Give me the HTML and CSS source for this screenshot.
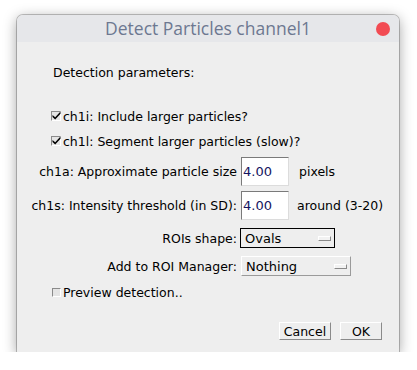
FILE: index.html
```html
<!DOCTYPE html>
<html lang="en">
<head>
  <meta charset="UTF-8" />
  <meta name="viewport" content="width=device-width, initial-scale=1.0" />
  <title>Detect Particles channel1</title>
  <link rel="stylesheet" href="styles.css">
</head>
<body>

  <div class="window">
    <div class="titlebar">
      <span class="title">Detect Particles channel1</span>
      <span class="close"></span>
    </div>

    <div class="content">
      <div class="heading">Detection parameters:</div>

      <div class="checks">
        <div class="check">
          <span class="box">
            <svg width="9" height="9" viewBox="0 0 9 9"><path d="M0.5 4 L3.2 6.2 L8.5 0.5 L8.5 2.8 L3.2 8.5 L0.5 6 Z" fill="#000"/></svg>
          </span>
          <span>ch1i: Include larger particles?</span>
        </div>
        <div class="check">
          <span class="box">
            <svg width="9" height="9" viewBox="0 0 9 9"><path d="M0.5 4 L3.2 6.2 L8.5 0.5 L8.5 2.8 L3.2 8.5 L0.5 6 Z" fill="#000"/></svg>
          </span>
          <span>ch1l: Segment larger particles (slow)?</span>
        </div>
      </div>

      <div class="params">
        <span class="label">ch1a: Approximate particle size</span>
        <div class="control">
          <span class="field">4.00</span>
          <span class="unit">pixels</span>
        </div>

        <span class="label">ch1s: Intensity threshold (in SD):</span>
        <div class="control">
          <span class="field">4.00</span>
          <span class="unit unit--around">around (3-20)</span>
        </div>

        <span class="label choice-row">ROIs shape:</span>
        <div class="control choice-row">
          <span class="choice choice--focus choice--short">Ovals<i class="knob"></i></span>
        </div>

        <span class="label choice-row">Add to ROI Manager:</span>
        <div class="control choice-row">
          <span class="choice choice--long">Nothing<i class="knob"></i></span>
        </div>
      </div>

      <div class="check preview">
        <span class="box"></span>
        <span>Preview detection..</span>
      </div>

      <div class="buttons">
        <button class="button button--cancel">Cancel</button>
        <button class="button button--ok">OK</button>
      </div>
    </div>
  </div>

</body>
</html>
```

FILE: styles.css
```css
* {
  margin: 0;
  padding: 0;
  box-sizing: border-box;
}

body {
  background-color: #ffffff;
  font-family: "DejaVu Sans", sans-serif;
  font-size: 12.5px;
  color: #000;
}

.window {
  margin: 15px 18px 0 17px;
  width: 382px;
  height: 337px;
  background-color: #eeeeee;
  border-radius: 6px 6px 0 0;
  box-shadow: 0 0 0 1px rgba(0, 0, 0, 0.22), 0 3px 14px rgba(0, 0, 0, 0.38);
  display: flex;
  flex-direction: column;
}

.titlebar {
  height: 27px;
  background-color: #e6e7ea;
  border-radius: 6px 6px 0 0;
  display: grid;
  grid-template-columns: 1fr auto 1fr;
  align-items: center;
}

.title {
  grid-column: 2;
  font-family: "Open Sans", sans-serif;
  font-size: 17.5px;
  color: #6d7891;
  line-height: 27px;
}

.close {
  grid-column: 3;
  justify-self: end;
  margin-right: 9px;
  width: 14px;
  height: 14px;
  border-radius: 50%;
  background-color: #f24b53;
}

.content {
  flex: 1;
  display: flex;
  flex-direction: column;
  padding: 23px 17px 12px 0;
}

.heading {
  margin-left: 36px;
  line-height: 16px;
}

.checks {
  margin-top: 26px;
  display: flex;
  flex-direction: column;
  gap: 7px;
}

.check {
  margin-left: 34px;
  display: flex;
  align-items: center;
  gap: 2px;
  height: 18px;
}

.box {
  flex: none;
  width: 10px;
  height: 10px;
  background-color: #e4e4e4;
  border-top: 1px solid #8a8a8a;
  border-left: 1px solid #8a8a8a;
  border-bottom: 1px solid #ffffff;
  border-right: 1px solid #ffffff;
  position: relative;
}

.box svg {
  position: absolute;
  left: 0;
  top: -1px;
}

.params {
  margin-top: 7px;
  display: grid;
  grid-template-columns: 220px 1fr;
  column-gap: 4px;
  row-gap: 5px;
  align-items: center;
}

.label {
  text-align: right;
  white-space: nowrap;
}

.control {
  display: flex;
  align-items: center;
}

.choice-row {
  margin-top: 3px;
}

.field {
  width: 48px;
  height: 29px;
  background-color: #ffffff;
  border-top: 1px solid #7a7a7a;
  border-left: 1px solid #7a7a7a;
  border-bottom: 1px solid #dcdcdc;
  border-right: 1px solid #dcdcdc;
  color: #14145e;
  font-size: 13px;
  padding-left: 1px;
  line-height: 27px;
}

.unit {
  margin-left: 10px;
  white-space: nowrap;
}

.unit--around {
  margin-left: 8px;
}

.choice {
  height: 20px;
  display: flex;
  align-items: center;
  justify-content: space-between;
  padding: 0 3px 0 4px;
  font-size: 13px;
  background-color: #eeeeee;
  border-top: 1px solid #ffffff;
  border-left: 1px solid #ffffff;
  border-bottom: 1px solid #9a9a9a;
  border-right: 1px solid #9a9a9a;
}

.choice--focus {
  border: 1px solid #000000;
  margin-left: -1px;
}

.choice--short {
  width: 95px;
}

.choice--long {
  width: 110px;
}

.knob {
  width: 13px;
  height: 5px;
  background-color: #f2f2f2;
  border-top: 1px solid #ffffff;
  border-left: 1px solid #ffffff;
  border-bottom: 1px solid #8a8a8a;
  border-right: 1px solid #8a8a8a;
}

.preview {
  margin-top: 7px;
  margin-left: 35px;
}

.preview .box {
  width: 9px;
  height: 9px;
}

.buttons {
  margin-top: auto;
  display: flex;
  justify-content: flex-end;
  gap: 9px;
}

.button {
  height: 18px;
  font-family: "DejaVu Sans", sans-serif;
  font-size: 12.5px;
  color: #000;
  background-color: #eeeeee;
  border-top: 1px solid #ffffff;
  border-left: 1px solid #ffffff;
  border-bottom: 1px solid #8a8a8a;
  border-right: 1px solid #8a8a8a;
}

.button--cancel {
  width: 52px;
}

.button--ok {
  width: 42px;
}
```
